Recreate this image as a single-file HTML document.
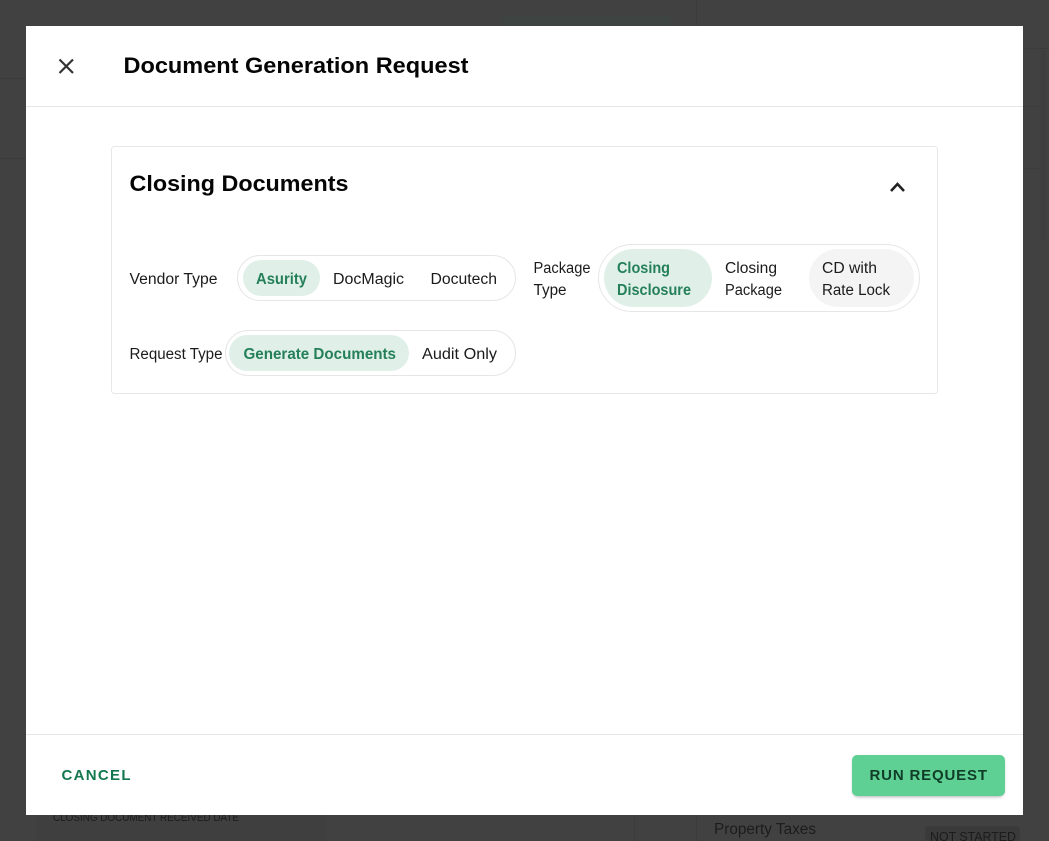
<!DOCTYPE html>
<html lang="en">
<head>
<meta charset="utf-8">
<title>Document Generation Request</title>
<style>
html,body{margin:0;padding:0;width:1049px;height:841px;overflow:hidden;background:#414141}
svg{display:block;position:absolute;left:0;top:0}
.b{font-family:"Liberation Sans",sans-serif;font-size:15.500px;fill:#1b1b1b}
.g{font-family:"Liberation Sans",sans-serif;font-size:15.500px;font-weight:700;fill:#25805a}
.h{font-family:"Liberation Sans",sans-serif;font-weight:700;fill:#050505}
.bg{font-family:"Liberation Sans",sans-serif;fill:#1c1c1c}
</style>
</head>
<body>
<svg width="1049" height="841" viewBox="0 0 1049 841" xmlns="http://www.w3.org/2000/svg">
  <defs>
    <filter id="s" x="-10%" y="-20%" width="120%" height="150%"><feGaussianBlur stdDeviation="1.500"/></filter>
  </defs>
  <rect width="1049" height="841" fill="#414141"/>
  <!-- dimmed background -->
  <rect x="0" y="78" width="696" height="1" fill="#3b3b3b"/>
  <rect x="0" y="158" width="696" height="1" fill="#3b3b3b"/>
  <rect x="696" y="0" width="1" height="841" fill="#3c3c3c"/>
  <rect x="1023" y="48" width="26" height="1" fill="#3c3c3c"/>
  <rect x="1023" y="106" width="18" height="1" fill="#3c3c3c"/>
  <rect x="1023" y="168" width="18" height="1" fill="#3c3c3c"/>
  <rect x="1041" y="50" width="5" height="190" fill="#3e3e3e"/>
  <path d="M502 26V23a7 7 0 0 1 7-7H671V26Z" fill="#3d4441"/>
  <rect x="36" y="815" width="290" height="26" fill="#3f3f3f"/>
  <rect x="634" y="815" width="1" height="26" fill="#3c3c3c"/>
  <rect x="925" y="826" width="95" height="15" rx="4" fill="#3a3a3a"/>
  <text class="bg" x="53" y="821" font-size="11" textLength="186" lengthAdjust="spacingAndGlyphs">CLOSING DOCUMENT RECEIVED DATE</text>
  <text class="bg" x="714" y="834" font-size="15.500" textLength="102" lengthAdjust="spacingAndGlyphs">Property Taxes</text>
  <text class="bg" x="930" y="841" font-size="13" textLength="86" lengthAdjust="spacingAndGlyphs">NOT STARTED</text>

  <!-- modal -->
  <rect x="26" y="26" width="997" height="789" fill="#ffffff"/>
  <rect x="26" y="106" width="997" height="1" fill="#e6e6e6"/>
  <rect x="26" y="734" width="997" height="1" fill="#e6e6e6"/>

  <path d="M59.500 59.500L73 73M73 59.500L59.500 73" stroke="#333" stroke-width="2.200" fill="none"/>
  <text class="h" x="123.500" y="73" font-size="22.500" textLength="345" lengthAdjust="spacingAndGlyphs">Document Generation Request</text>

  <!-- card -->
  <rect x="111.500" y="146.500" width="826" height="247" rx="3" fill="#fff" stroke="#e8e8e8"/>
  <text class="h" x="129.500" y="191" font-size="22.500" textLength="219" lengthAdjust="spacingAndGlyphs">Closing Documents</text>
  <path d="M891 191L897.500 184L904 191" stroke="#222" stroke-width="2.600" fill="none"/>

  <!-- vendor type -->
  <text class="b" x="129.500" y="284" textLength="88" lengthAdjust="spacingAndGlyphs">Vendor Type</text>
  <rect x="237.500" y="255.500" width="278" height="45" rx="22.500" fill="#fff" stroke="#e6e6e6"/>
  <rect x="243" y="260" width="77" height="36" rx="18" fill="#e0f0e9"/>
  <text class="g" x="256" y="284" textLength="51" lengthAdjust="spacingAndGlyphs">Asurity</text>
  <text class="b" x="333" y="284" textLength="71" lengthAdjust="spacingAndGlyphs">DocMagic</text>
  <text class="b" x="430.500" y="284" textLength="66.500" lengthAdjust="spacingAndGlyphs">Docutech</text>

  <!-- package type -->
  <text class="b" x="533.500" y="273" textLength="57" lengthAdjust="spacingAndGlyphs">Package</text>
  <text class="b" x="533.500" y="295" textLength="33" lengthAdjust="spacingAndGlyphs">Type</text>
  <rect x="598.500" y="244.500" width="321" height="67" rx="33.500" fill="#fff" stroke="#e6e6e6"/>
  <rect x="604" y="249" width="108" height="58" rx="29" fill="#e0f0e9"/>
  <rect x="809" y="249" width="105" height="58" rx="29" fill="#f4f4f4"/>
  <text class="g" x="617" y="273" textLength="53" lengthAdjust="spacingAndGlyphs">Closing</text>
  <text class="g" x="617" y="295" textLength="74" lengthAdjust="spacingAndGlyphs">Disclosure</text>
  <text class="b" x="725" y="273" textLength="52" lengthAdjust="spacingAndGlyphs">Closing</text>
  <text class="b" x="725" y="295" textLength="57" lengthAdjust="spacingAndGlyphs">Package</text>
  <text class="b" x="822" y="273" textLength="55" lengthAdjust="spacingAndGlyphs">CD with</text>
  <text class="b" x="822" y="295" textLength="68" lengthAdjust="spacingAndGlyphs">Rate Lock</text>

  <!-- request type -->
  <text class="b" x="129.500" y="359" textLength="93" lengthAdjust="spacingAndGlyphs">Request Type</text>
  <rect x="225.500" y="330.500" width="290" height="45" rx="22.500" fill="#fff" stroke="#e6e6e6"/>
  <rect x="229" y="335" width="180" height="36" rx="18" fill="#e0f0e9"/>
  <text class="g" x="243.500" y="359" textLength="152.500" lengthAdjust="spacingAndGlyphs">Generate Documents</text>
  <text class="b" x="422" y="359" textLength="75" lengthAdjust="spacingAndGlyphs">Audit Only</text>

  <!-- footer -->
  <text x="61.500" y="780" font-family="'Liberation Sans',sans-serif" font-size="15" font-weight="700" fill="#14784f" textLength="69" lengthAdjust="spacing">CANCEL</text>
  <rect x="853" y="757" width="151" height="40" rx="5" fill="#000" opacity=".3" filter="url(#s)"/>
  <rect x="852" y="755" width="153" height="41" rx="5" fill="#5fd094"/>
  <text x="869.500" y="780" font-family="'Liberation Sans',sans-serif" font-size="15" font-weight="700" fill="#0f3d27" textLength="117.500" lengthAdjust="spacing">RUN REQUEST</text>
</svg>
</body>
</html>
